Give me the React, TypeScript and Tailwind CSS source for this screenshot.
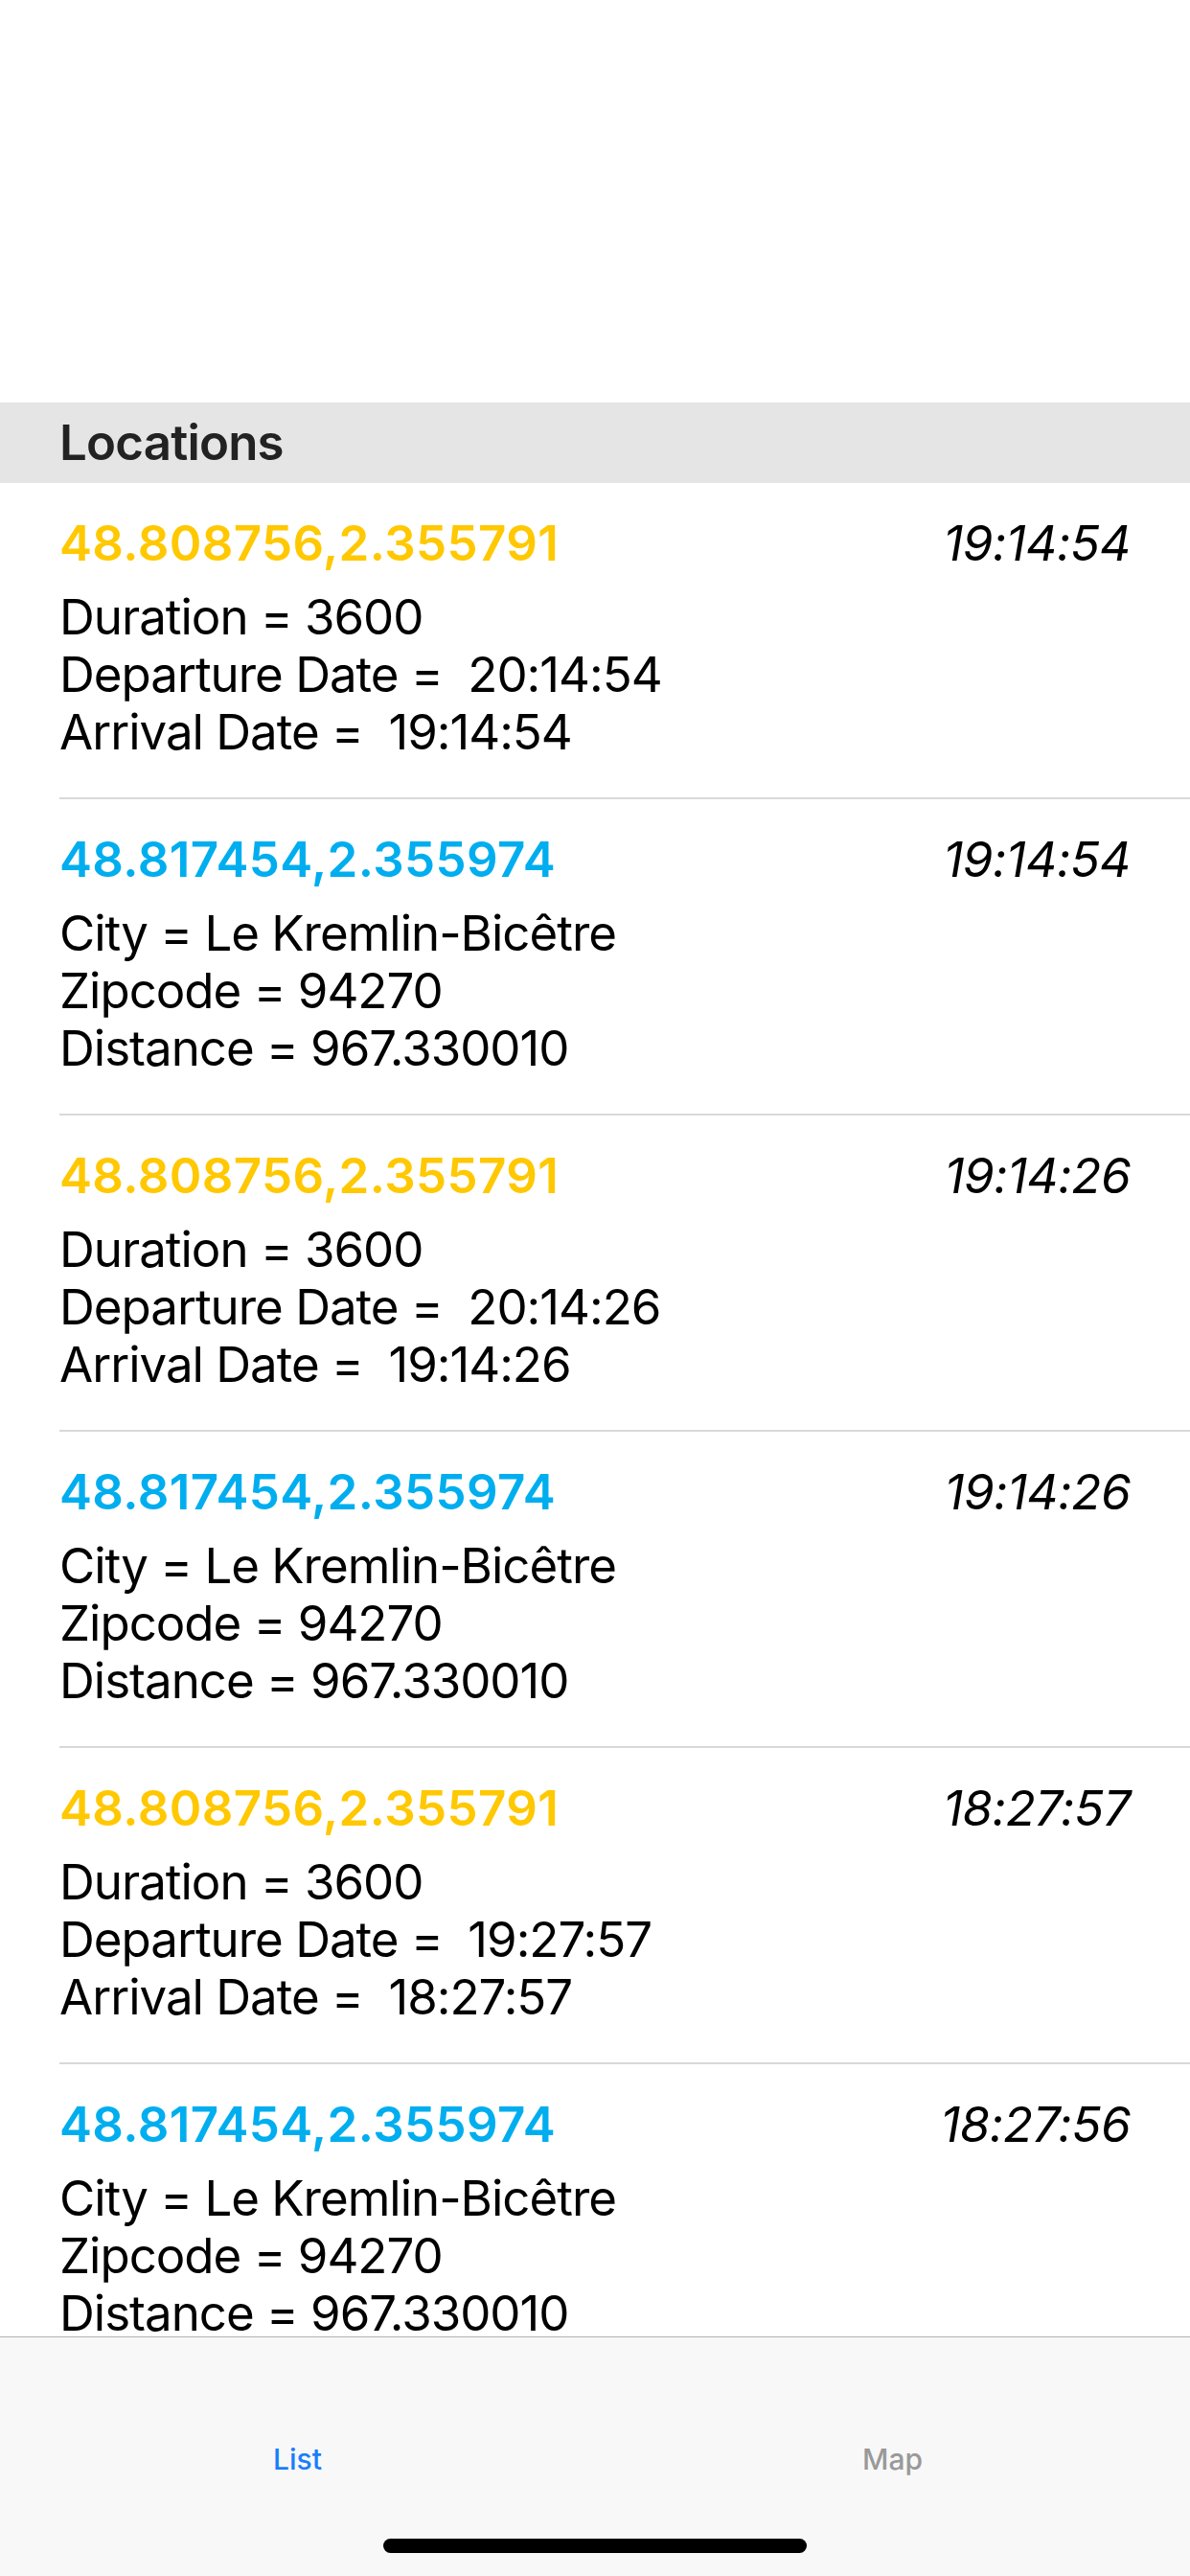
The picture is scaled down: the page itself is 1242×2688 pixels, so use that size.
import React from "react";

type Row = {
  coord: string;
  kind: "stop" | "visit";
  time: string;
  lines: string[];
};

const rows: Row[] = [
  { coord: "48.808756,2.355791", kind: "stop", time: "19:14:54", lines: ["Duration = 3600", "Departure Date =  20:14:54", "Arrival Date =  19:14:54"] },
  { coord: "48.817454,2.355974", kind: "visit", time: "19:14:54", lines: ["City = Le Kremlin-Bicêtre", "Zipcode = 94270", "Distance = 967.330010"] },
  { coord: "48.808756,2.355791", kind: "stop", time: "19:14:26", lines: ["Duration = 3600", "Departure Date =  20:14:26", "Arrival Date =  19:14:26"] },
  { coord: "48.817454,2.355974", kind: "visit", time: "19:14:26", lines: ["City = Le Kremlin-Bicêtre", "Zipcode = 94270", "Distance = 967.330010"] },
  { coord: "48.808756,2.355791", kind: "stop", time: "18:27:57", lines: ["Duration = 3600", "Departure Date =  19:27:57", "Arrival Date =  18:27:57"] },
  { coord: "48.817454,2.355974", kind: "visit", time: "18:27:56", lines: ["City = Le Kremlin-Bicêtre", "Zipcode = 94270", "Distance = 967.330010"] },
];

export default function App() {
  return (
    <div
      className="w-[1242px] h-[2688px] bg-white flex flex-col overflow-hidden"
      style={{ fontFamily: "Inter, 'Noto Sans', 'Liberation Sans', sans-serif" }}
    >
      <div className="h-[420px] shrink-0 bg-white" />
      <div className="h-[84px] shrink-0 bg-[#e5e5e5] flex items-center pl-[62px]">
        <span className="text-[51px] leading-[84px] font-semibold text-[#222222] tracking-[-0.8px]">Locations</span>
      </div>
      <div className="flex-1 overflow-hidden">
        {rows.map((r, i) => (
          <div key={i} className="pl-[62px]">
            <div className="pr-[62px] pt-[33px] pb-[38px] border-b-2 border-[#d9d9d9]">
              <div className="flex justify-between items-start h-[60px]">
                <span
                  className={`text-[51px] leading-[60px] font-semibold tracking-[0.4px] ${
                    r.kind === "stop" ? "text-[#ffc800]" : "text-[#00aeef]"
                  }`}
                >
                  {r.coord}
                </span>
                <span className="text-[51px] leading-[60px] italic text-black tracking-[-0.5px]">{r.time}</span>
              </div>
              <div className="mt-[17px] flex flex-col">
                {r.lines.map((l, j) => (
                  <span key={j} className="text-[51px] leading-[60px] text-black tracking-[-1px] whitespace-pre">
                    {l}
                  </span>
                ))}
              </div>
            </div>
          </div>
        ))}
      </div>
      <div className="h-[250px] shrink-0 bg-[#f8f8f8] border-t border-[#b3b3b3] flex flex-col">
        <div className="flex h-[180px]">
          <div className="flex-1 flex justify-center pt-[112px]">
            <span className="text-[30px] leading-[30px] font-medium text-[#1a7efb]">List</span>
          </div>
          <div className="flex-1 flex justify-center pt-[112px]">
            <span className="text-[30px] leading-[30px] font-medium text-[#999999]">Map</span>
          </div>
        </div>
        <div className="flex justify-center pt-[30px]">
          <div className="w-[442px] h-[15px] rounded-full bg-black" />
        </div>
      </div>
    </div>
  );
}
